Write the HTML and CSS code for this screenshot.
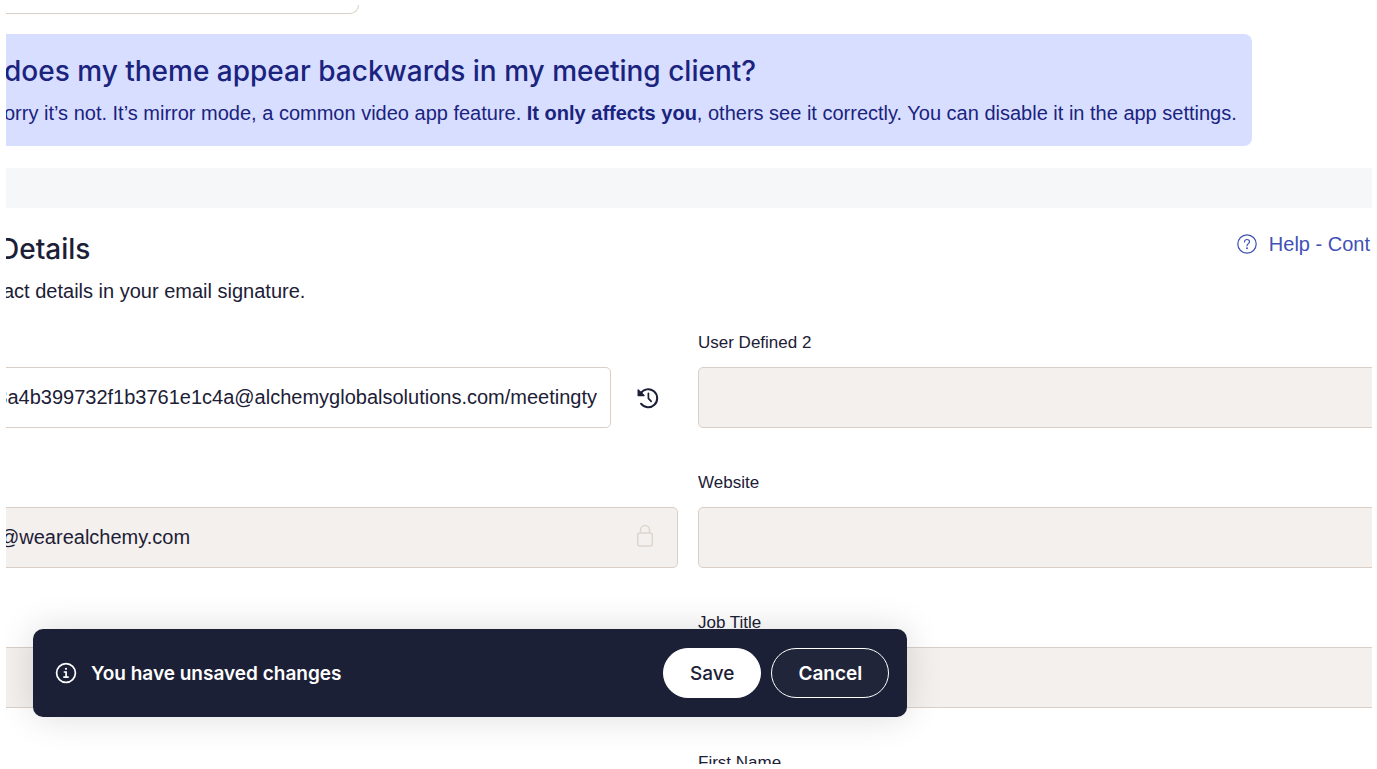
FILE: index.html
```
<!DOCTYPE html>
<html lang="en">
<head>
    <meta charset="UTF-8">
    <meta name="viewport" content="width=device-width, initial-scale=1.0">
    <title>Details</title>
    <link rel="stylesheet" href="styles.css">
</head>
<body>
    <main class="viewport">
        <div class="page">
            <div class="preview"></div>
            <section class="banner">
                <h2>does my theme appear backwards in my meeting client?</h2>
                <p>orry it’s not. It’s mirror mode, a common video app feature. <strong>It only affects you</strong>, others see it correctly. You can disable it in the app settings.</p>
            </section>
            <div class="divider"></div>
            <section class="details">
                <header class="details-header">
                    <div>
                        <h2>Details</h2>
                        <p>act details in your email signature.</p>
                    </div>
                    <a class="help" href="#">
                        <svg width="20" height="20" viewBox="0 0 20 20" fill="none" stroke="currentColor" stroke-width="1.2" stroke-linecap="round">
                            <circle cx="10" cy="10" r="9.2"/>
                            <path d="M7.5 7.9C7.5 6.4 8.6 5.5 10 5.5s2.5.9 2.5 2.2c0 1.9-2.5 2-2.5 4.1"/>
                            <circle cx="10" cy="14.3" r=".4" fill="currentColor"/>
                        </svg>
                        Help - Cont
                    </a>
                </header>
                <form class="fields" id="detailsForm">
                    <div class="field">
                        <div class="label"></div>
                        <div class="with-action">
                            <input type="text" class="url" aria-label="Meeting link" value="3a4b399732f1b3761e1c4a@alchemyglobalsolutions.com/meetingty">
                            <button type="button" class="history" aria-label="Restore">
                                <svg width="22" height="22" viewBox="0 0 22 22" fill="none" stroke="currentColor" stroke-width="2" stroke-linecap="round" stroke-linejoin="round">
                                    <path d="M3.6 6.4A9 9 0 1 1 4 16.7"/>
                                    <path d="M1.2 3v5.6h5.8z" fill="currentColor" stroke-width="1.4"/>
                                    <path d="M11.4 6.3v5l2.8 3" stroke-width="1.7"/>
                                </svg>
                            </button>
                        </div>
                    </div>
                    <div class="field">
                        <label class="label" for="user2">User Defined 2</label>
                        <input type="text" id="user2" readonly>
                    </div>
                    <div class="field">
                        <div class="label"></div>
                        <div class="locked">
                            <input type="text" aria-label="Email" value="@wearealchemy.com" readonly>
                            <svg class="lock" width="18" height="24" viewBox="0 0 18 24" fill="none" stroke="currentColor" stroke-width="1.4">
                                <rect x="1.7" y="9" width="14.6" height="13" rx="2"/>
                                <path d="M4.5 9V6a4.5 4.5 0 0 1 9 0v3"/>
                            </svg>
                        </div>
                    </div>
                    <div class="field">
                        <label class="label" for="website">Website</label>
                        <input type="text" id="website" readonly>
                    </div>
                    <div class="field">
                        <div class="label"></div>
                        <input type="text" aria-label="Phone" readonly>
                    </div>
                    <div class="field">
                        <label class="label" for="jobTitle">Job Title</label>
                        <input type="text" id="jobTitle" readonly>
                    </div>
                    <div class="field"></div>
                    <div class="field">
                        <label class="label" for="firstName">First Name</label>
                        <input type="text" id="firstName" readonly>
                    </div>
                </form>
            </section>
        </div>
        <div class="toast" role="status">
            <svg width="22" height="22" viewBox="0 0 22 22" fill="none" stroke="currentColor" stroke-width="1.7">
                <circle cx="11" cy="11" r="9.4"/>
                <circle cx="11" cy="6.8" r="1.1" fill="currentColor" stroke="none"/>
                <path d="M8.7 10h2.4v5M8.3 15.2h5.4"/>
            </svg>
            <span class="message">You have unsaved changes</span>
            <button type="submit" form="detailsForm" class="save">Save</button>
            <button type="reset" form="detailsForm" class="cancel">Cancel</button>
        </div>
    </main>
</body>
</html>
```
FILE: styles.css
```
* {
    box-sizing: border-box;
}
body {
    margin: 0;
    padding: 5px 5px 5px 6px;
    background: #fff;
    color: #1c2036;
    font-family: "Liberation Sans", Arial, sans-serif;
    font-size: 20px;
}
h2, p {
    margin: 0;
    font-weight: 500;
    white-space: nowrap;
}
h2 {
    font-family: Inter, sans-serif;
    font-size: 28px;
    line-height: 36px;
}
p {
    font-weight: 400;
    line-height: 24px;
}
.viewport {
    position: relative;
    height: calc(100vh - 10px);
    overflow: hidden;
}
.page {
    margin: 0 -8px 0 -10px;
}
.preview {
    width: 363px;
    height: 9px;
    border: 1px solid #d9cfc6;
    border-width: 0 1px 1px 0;
    border-bottom-right-radius: 9px;
}
.banner {
    margin: 20px 128px 22px 0;
    padding: 19px 8px 21px 8px;
    border-radius: 8px;
    background: #d8deff;
    color: #1a237e;
}
.banner p {
    margin-top: 12px;
}
.divider {
    height: 40px;
    background: #f5f7f9;
}
.details {
    padding-top: 23px;
}
.details-header {
    display: flex;
    justify-content: space-between;
    align-items: flex-start;
}
.details-header h2 {
    padding-left: 3px;
}
.details-header p {
    margin-top: 12px;
    padding-left: 7px;
}
.help {
    display: flex;
    align-items: center;
    gap: 12px;
    padding-right: 10px;
    line-height: 26px;
    color: #3f51b5;
    text-decoration: none;
    white-space: nowrap;
}
.fields {
    display: grid;
    grid-template-columns: 1fr 1fr;
    gap: 45px 20px;
    padding-top: 30px;
}
.label {
    display: block;
    height: 20px;
    margin-bottom: 14px;
    font-size: 17px;
    line-height: 20px;
}
.field {
    min-height: 95px;
}
input {
    display: block;
    width: 100%;
    height: 61px;
    padding: 0 13px;
    border: 1px solid #d9cfc6;
    border-radius: 5px;
    background: #fff;
    color: inherit;
    font: inherit;
}
input:read-only {
    background: #f4f0ed;
}
.with-action {
    display: flex;
    align-items: center;
    margin-left: -20px;
}
.url {
    flex: 1;
    text-align: right;
}
.history {
    display: flex;
    justify-content: center;
    width: 67px;
    padding: 0 0 0 6px;
    border: 0;
    background: none;
    color: inherit;
}
.locked {
    position: relative;
}
.locked input {
    padding-left: 2px;
}
.lock {
    position: absolute;
    right: 24px;
    top: 17px;
    color: #ddd4cc;
}
.toast {
    position: absolute;
    left: 27px;
    bottom: 47px;
    display: flex;
    align-items: center;
    gap: 10px;
    width: 64%;
    height: 88px;
    padding: 0 18px 0 22px;
    border-radius: 10px;
    background: #1c2036;
    color: #fff;
    box-shadow: 0 0 36px rgba(0, 0, 0, 0.14);
}
.message {
    flex: 1;
    padding-left: 4px;
    font-family: Inter, sans-serif;
    font-size: 19px;
    font-weight: 600;
}
.toast button {
    height: 50px;
    padding: 0 26px;
    border: 1px solid #fff;
    border-radius: 25px;
    font-family: Inter, sans-serif;
    font-size: 19px;
    font-weight: 500;
}
.toast .save {
    background: #fff;
    color: #1c2036;
}
.toast .cancel {
    background: #212539;
    color: #fff;
    font-weight: 600;
}
```
